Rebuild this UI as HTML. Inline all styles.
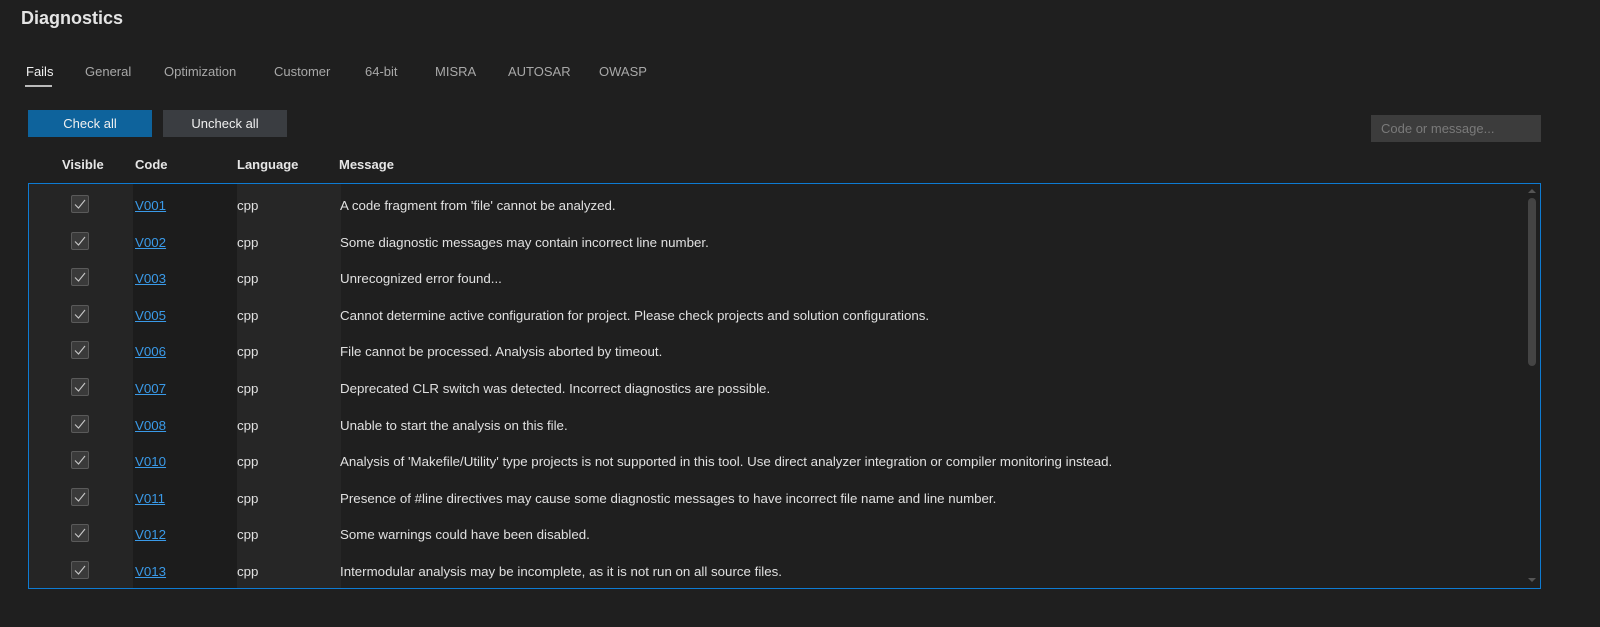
<!DOCTYPE html>
<html><head><style>
body{margin:0;width:1600px;height:627px;background:#1f1f1f;font-family:"Liberation Sans",sans-serif;color:#e0e0e0;position:relative;overflow:hidden}
.abs{position:absolute}
h1{position:absolute;left:21px;top:8px;margin:0;font-size:18px;font-weight:bold;color:#e4e4e4}
.tab{position:absolute;top:64px;font-size:13px;color:#a8a8a8}
.btn{position:absolute;top:110px;height:27px;width:124px;font-size:13px;text-align:center;line-height:27px;color:#f0f0f0}
.hd{position:absolute;top:157px;font-size:13px;font-weight:bold;color:#e6e6e6}
.box{position:absolute;left:28px;top:183px;width:1511px;height:404px;border:1px solid #0e7bd2;overflow:hidden;background:#1f1f1f}
.col{position:absolute;top:0;height:404px}
.row{position:absolute;left:0;width:1500px;height:36px;font-size:13.3px}
.row span{position:absolute;top:12px}
.cb{position:absolute;left:42px;top:9px;width:18px;height:18px;border:1px solid #5a5a5a;background:#3a3a3a;border-radius:2px;box-sizing:border-box}
a{color:#3a9ae8;text-decoration:underline}
</style></head><body>
<h1>Diagnostics</h1>
<div class="tab" style="left:26px;color:#f0f0f0">Fails</div>
<div class="abs" style="left:25px;top:85px;width:27px;height:2px;background:#bbb"></div>
<div class="tab" style="left:85px">General</div>
<div class="tab" style="left:164px">Optimization</div>
<div class="tab" style="left:274px">Customer</div>
<div class="tab" style="left:365px">64-bit</div>
<div class="tab" style="left:435px">MISRA</div>
<div class="tab" style="left:508px">AUTOSAR</div>
<div class="tab" style="left:599px">OWASP</div>
<div class="btn" style="left:28px;background:#0e639c">Check all</div>
<div class="btn" style="left:163px;background:#3a3d41">Uncheck all</div>
<div class="abs" style="left:1371px;top:115px;width:170px;height:27px;background:#3c3c3c;color:#7a7a7a;font-size:13px;line-height:27px;padding-left:10px;box-sizing:border-box">Code or message...</div>
<div class="hd" style="left:62px">Visible</div>
<div class="hd" style="left:135px">Code</div>
<div class="hd" style="left:237px">Language</div>
<div class="hd" style="left:339px">Message</div>
<div class="box">
<div class="col" style="left:0;width:104px;background:#252525"></div>
<div class="col" style="left:104px;width:104px;background:#1c1c1c"></div>
<div class="col" style="left:208px;width:104px;background:#262626"></div>
<div class="abs" style="left:1499px;top:5px;width:0;height:0;border-left:4px solid transparent;border-right:4px solid transparent;border-bottom:4px solid #555"></div>
<div class="abs" style="left:1499px;top:14px;width:8px;height:168px;background:#444;border-radius:4px"></div>
<div class="abs" style="left:1499px;top:394px;width:0;height:0;border-left:4px solid transparent;border-right:4px solid transparent;border-top:4px solid #555"></div>
<div id="rows"></div>
</div>
<script>
var d=[["V001","A code fragment from 'file' cannot be analyzed."],["V002","Some diagnostic messages may contain incorrect line number."],["V003","Unrecognized error found..."],["V005","Cannot determine active configuration for project. Please check projects and solution configurations."],["V006","File cannot be processed. Analysis aborted by timeout."],["V007","Deprecated CLR switch was detected. Incorrect diagnostics are possible."],["V008","Unable to start the analysis on this file."],["V010","Analysis of 'Makefile/Utility' type projects is not supported in this tool. Use direct analyzer integration or compiler monitoring instead."],["V011","Presence of #line directives may cause some diagnostic messages to have incorrect file name and line number."],["V012","Some warnings could have been disabled."],["V013","Intermodular analysis may be incomplete, as it is not run on all source files."]];
var h="";d.forEach(function(r,i){var t=2+i*36.6;h+='<div class="row" style="top:'+t+'px"><div class="cb"><svg width="16" height="16" style="position:absolute;left:0;top:0"><path d="M3 8.5 L6.5 12 L13 4" stroke="#c8c8c8" stroke-width="1.1" fill="none"/></svg></div><span style="left:106px"><a>'+r[0]+'</a></span><span style="left:208px">cpp</span><span style="left:311px">'+r[1]+'</span></div>'});
document.getElementById("rows").innerHTML=h;
</script>
</body></html>
